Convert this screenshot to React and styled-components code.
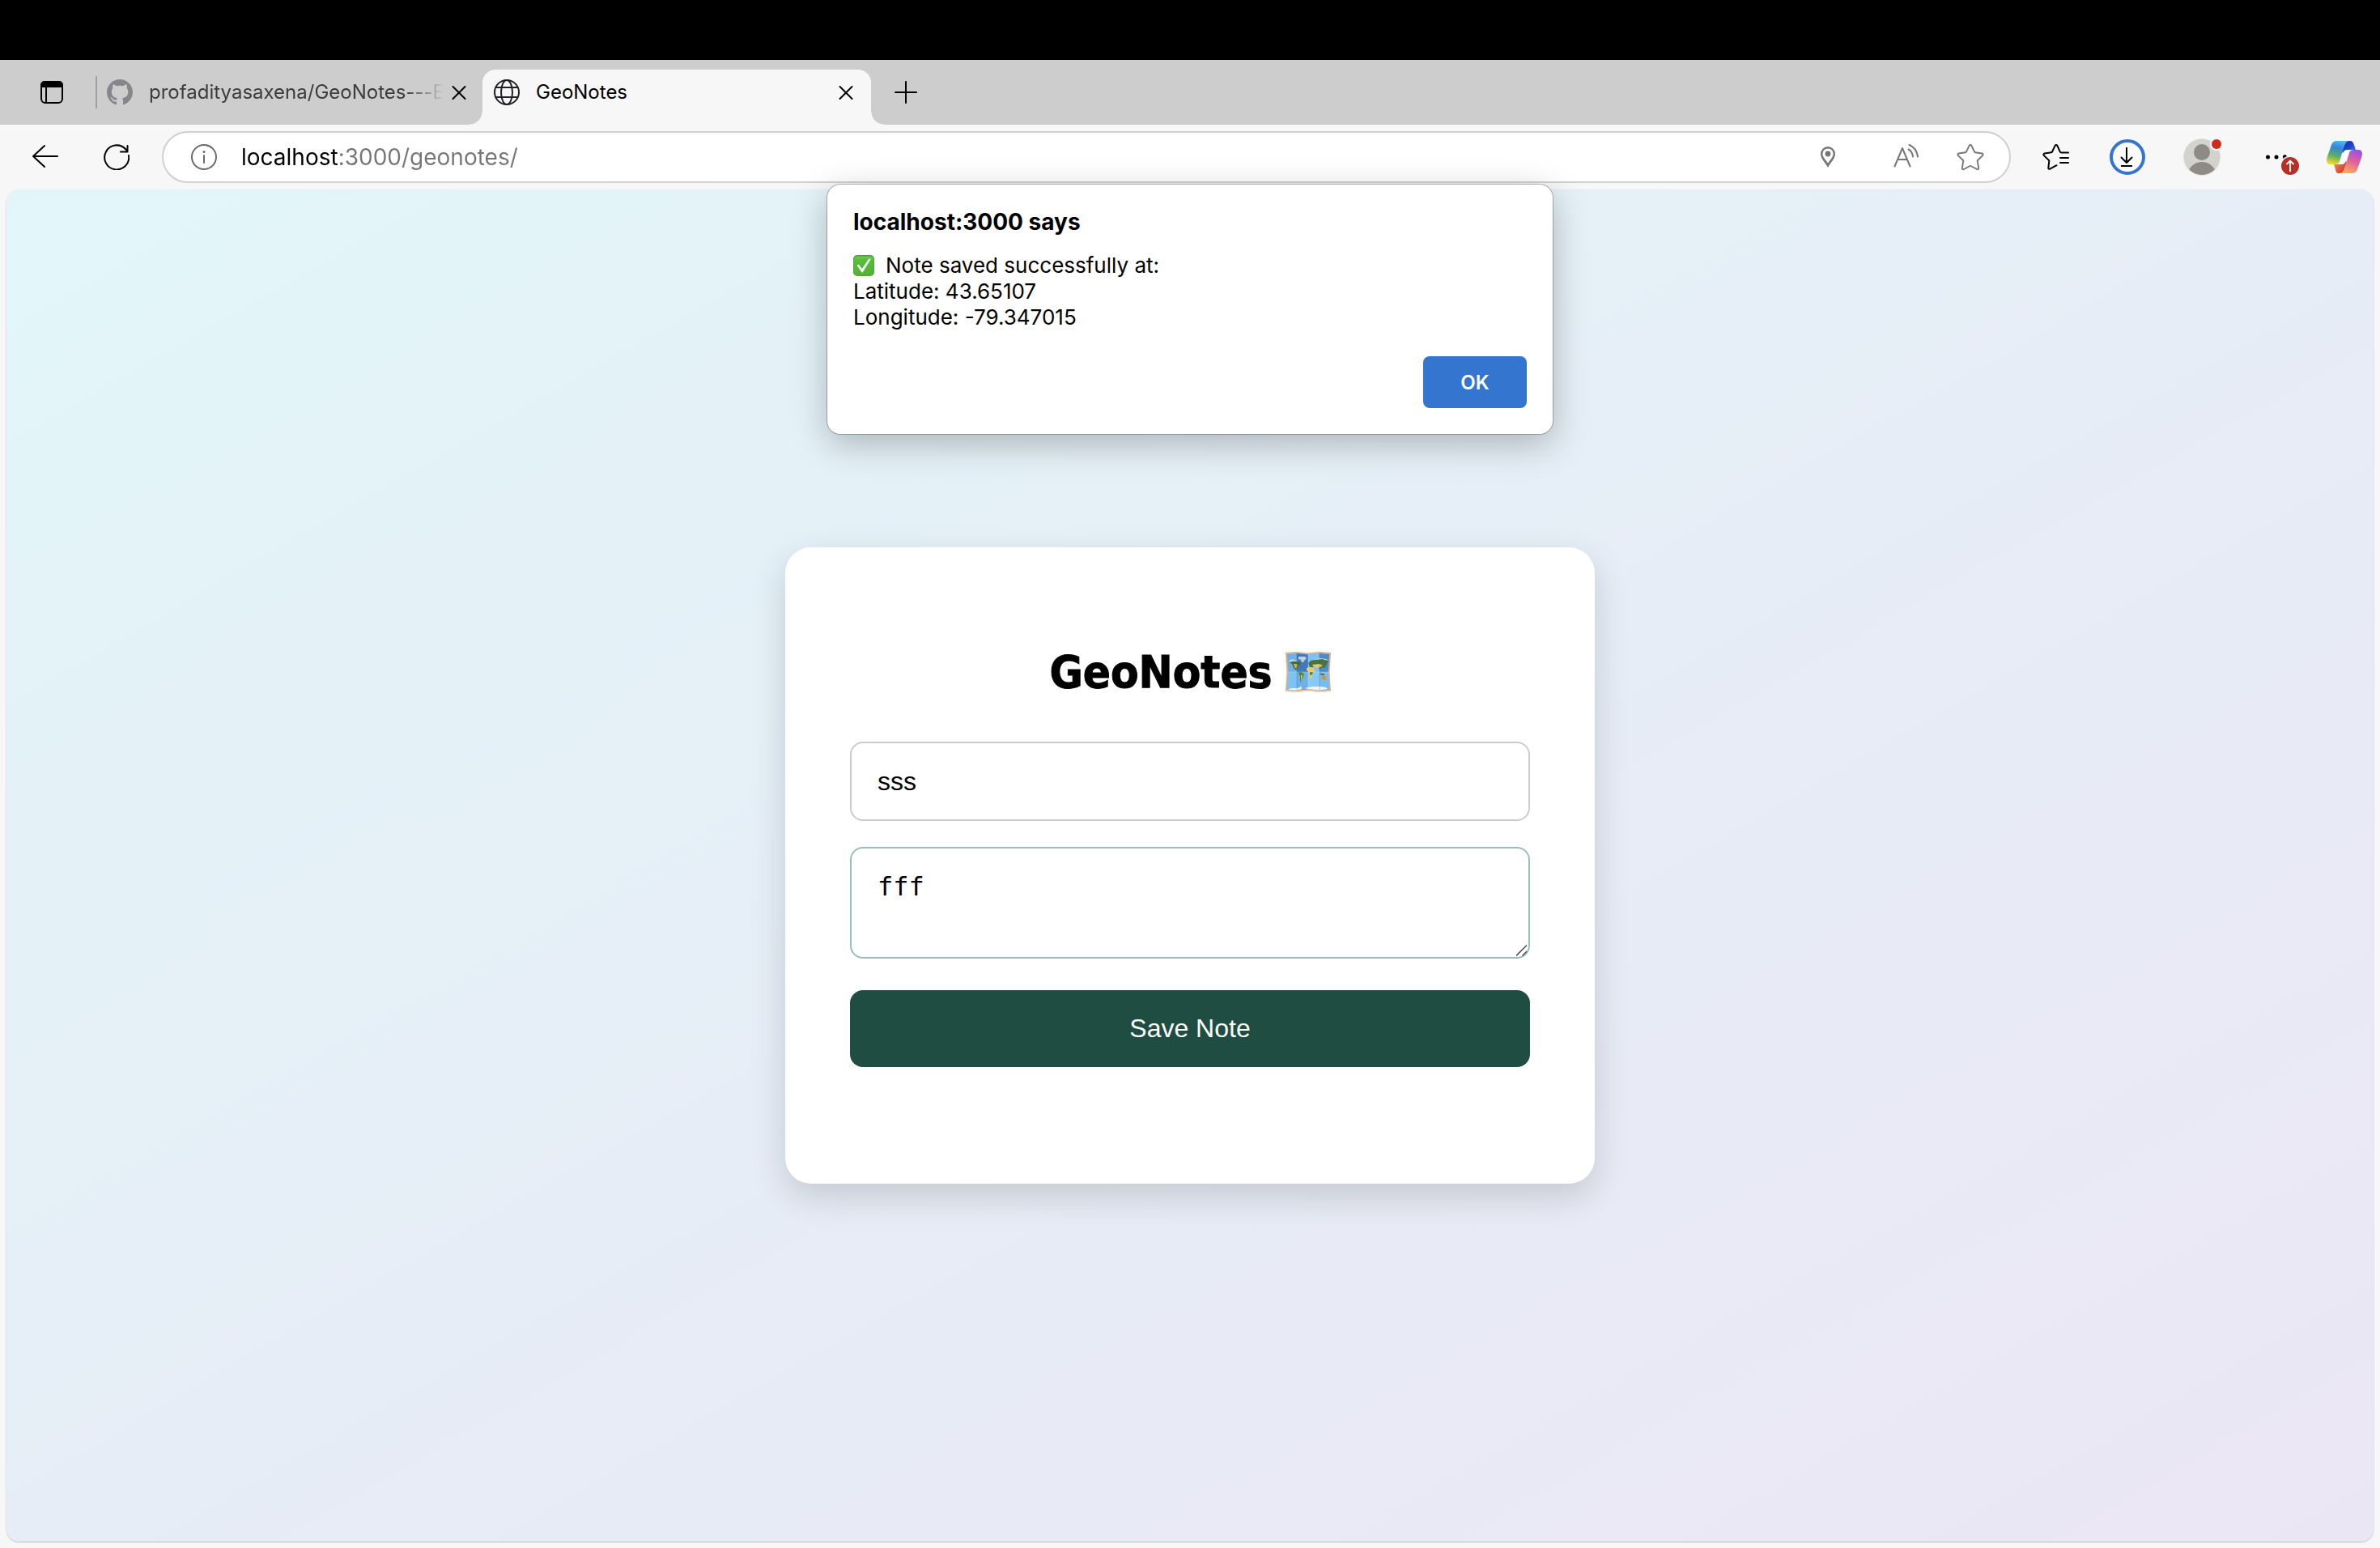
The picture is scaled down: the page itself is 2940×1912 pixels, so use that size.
import React, { useState } from "react";
import styled, { createGlobalStyle, css } from "styled-components";

const ui = `Inter, "Noto Sans", sans-serif`;
const form = `"Liberation Sans", Arial, sans-serif`;

const GlobalStyle = createGlobalStyle`
  *, *::before, *::after { box-sizing: border-box; }
  body { margin: 0; background: #f7f7f7; font-family: ${ui}; color: #000; }
  button { font: inherit; color: inherit; border: 0; padding: 0; background: none; cursor: pointer; }
  svg { display: block; flex: none; }
`;

const Window = styled.div`
  min-height: 100vh;
  display: flex;
  flex-direction: column;
`;

const MenuBarStrip = styled.div`
  height: 74px;
  background: #000;
`;

const TabStrip = styled.div`
  height: 80px;
  padding: 12px 0 0 32px;
  display: flex;
  background: #cdcdcd;
`;

const StripButton = styled.button`
  width: ${(p) => p.$width}px;
  height: 56px;
  display: flex;
  align-items: center;
  justify-content: center;
`;

const Divider = styled.span`
  width: 2px;
  height: 40px;
  margin: 8px 0 0 22px;
  background: #a0a0a0;
`;

const Tab = styled.div`
  position: relative;
  width: ${(p) => (p.$active ? 480 : 476)}px;
  height: 68px;
  padding: 0 ${(p) => (p.$active ? 14 : 12)}px 12px;
  display: flex;
  align-items: center;
  ${(p) =>
    p.$active &&
    css`
      background: #f7f7f7;
      border-radius: 16px 16px 0 0;
      &::before,
      &::after {
        content: "";
        position: absolute;
        bottom: 0;
        width: 16px;
        height: 16px;
      }
      &::before {
        right: 100%;
        background: radial-gradient(circle at 0 0, #cdcdcd 15px, #f7f7f7 16px);
      }
      &::after {
        left: 100%;
        background: radial-gradient(circle at 100% 0, #cdcdcd 15px, #f7f7f7 16px);
      }
    `}
`;

const TabTitle = styled.button`
  flex: 1;
  min-width: 0;
  height: 56px;
  display: flex;
  align-items: center;
  gap: 20px;
  text-align: left;
`;

const TabText = styled.span`
  flex: 1;
  min-width: 0;
  font-size: 24px;
  line-height: 32px;
  white-space: nowrap;
  color: ${(p) => (p.$dim ? "#3c3c3c" : "#000")};
  ${(p) =>
    p.$dim &&
    css`
      mask-image: linear-gradient(to right, #000 calc(100% - 48px), transparent calc(100% - 2px));
    `}
`;

const CloseButton = styled.button`
  width: 34px;
  height: 32px;
  display: flex;
  align-items: center;
  justify-content: center;
`;

const Toolbar = styled.div`
  height: 80px;
  padding: 0 24px;
  display: flex;
  align-items: center;
  gap: 24px;
`;

const ToolButton = styled.button`
  width: ${(p) => p.$width || 64}px;
  height: 64px;
  flex: none;
  display: flex;
  align-items: center;
  justify-content: center;
`;

const AddressBar = styled.div`
  flex: 1;
  min-width: 0;
  height: 64px;
  padding: 0 8px 0 34px;
  display: flex;
  align-items: center;
  background: #fff;
  border: 2px solid #d0d0d0;
  border-radius: 32px;
`;

const AddressInput = styled.input`
  flex: 1;
  min-width: 0;
  height: 48px;
  margin-left: 30px;
  padding: 0;
  border: 0;
  outline: 0;
  font-family: ${ui};
  font-size: 28px;
  background: linear-gradient(to right, #000 122px, #767676 122px);
  background-clip: text;
  -webkit-text-fill-color: transparent;
`;

const Viewport = styled.main`
  position: relative;
  flex: 1;
  margin: 0 8px 8px;
  padding: 64px;
  display: flex;
  align-items: center;
  justify-content: center;
  border-radius: 16px;
  box-shadow: 0 1px 2px rgba(0, 0, 0, 0.25);
  background: linear-gradient(to bottom right, #e2f6f9, #e6edf6 50%, #ebe6f4);
`;

const DialogLayer = styled.div`
  position: absolute;
  inset: -6px 0 auto;
  display: flex;
  justify-content: center;
`;

const Dialog = styled.div`
  width: 896px;
  padding: 32px;
  background: #fff;
  border-radius: 16px;
  box-shadow: 0 0 0 1px rgba(0, 0, 0, 0.25), 0 12px 44px rgba(0, 0, 0, 0.25);
`;

const DialogTitle = styled.h2`
  margin: 0 0 24px;
  font-size: 28px;
  line-height: 28px;
  font-weight: 700;
`;

const DialogText = styled.p`
  margin: 0;
  font-size: 26px;
  line-height: 32px;
`;

const DialogLine = styled.span`
  display: flex;
  align-items: center;
  gap: 14px;
`;

const DialogActions = styled.div`
  margin-top: 32px;
  display: flex;
  justify-content: flex-end;
`;

const OkButton = styled.button`
  width: 128px;
  height: 64px;
  border-radius: 8px;
  background: #3375cf;
  color: #fff;
  font-size: 24px;
  font-weight: 600;
`;

const Card = styled.form`
  width: 1000px;
  max-width: 100%;
  padding: 120px 80px 144px;
  display: flex;
  flex-direction: column;
  background: #fff;
  border-radius: 32px;
  box-shadow: 0 16px 44px rgba(0, 0, 0, 0.15);
`;

const Heading = styled.h1`
  margin: 0 0 52px;
  display: flex;
  align-items: center;
  justify-content: center;
  gap: 16px;
  font-family: "DejaVu Sans Condensed", "DejaVu Sans", sans-serif;
  font-size: 56px;
  line-height: 68px;
  font-weight: 700;
  -webkit-text-stroke: 1px #000;
`;

const field = css`
  display: block;
  width: 100%;
  padding: 28px 32px;
  border: 2px solid ${(p) => p.$border};
  border-radius: 16px;
  outline: 0;
  background: #fff;
  color: #000;
  font-size: 32px;
  line-height: 38px;
`;

const TitleInput = styled.input`
  ${field}
  height: 98px;
  margin-bottom: 32px;
  font-family: ${form};
`;

const NoteWrap = styled.div`
  position: relative;
  margin-bottom: 39px;
`;

const NoteInput = styled.textarea`
  ${field}
  height: 138px;
  resize: none;
  overflow: hidden;
  font-family: "DejaVu Sans Mono", monospace;
`;

const Grip = styled.svg`
  position: absolute;
  right: 3px;
  bottom: 3px;
  pointer-events: none;
`;

const SaveButton = styled.button`
  height: 95px;
  border-radius: 16px;
  background: #1f4d42;
  color: #fff;
  font-family: ${form};
  font-size: 32px;
`;

const stroke = { fill: "none", stroke: "currentColor", strokeLinecap: "round", strokeLinejoin: "round" };

const SidebarIcon = () => (
  <svg width="32" height="32" viewBox="0 0 32 32">
    <rect x="3" y="3" width="26" height="26" rx="5" {...stroke} strokeWidth="2" />
    <path d="M2 10V7a5 5 0 0 1 5-5h18a5 5 0 0 1 5 5v3z" />
    <path d="M9 10v19" {...stroke} strokeWidth="2" />
  </svg>
);

const GithubIcon = () => (
  <svg width="32" height="32" viewBox="0 0 16 16" fill="#85878a">
    <path d="M8 0C3.58 0 0 3.58 0 8c0 3.54 2.29 6.53 5.47 7.59.4.07.55-.17.55-.38 0-.19-.01-.82-.01-1.49-2.01.37-2.53-.49-2.69-.94-.09-.23-.48-.94-.82-1.13-.28-.15-.68-.52-.01-.53.63-.01 1.08.58 1.23.82.72 1.21 1.87.87 2.33.66.07-.52.28-.87.51-1.07-1.78-.2-3.64-.89-3.64-3.95 0-.87.31-1.59.82-2.15-.08-.2-.36-1.02.08-2.12 0 0 .67-.21 2.2.82.64-.18 1.32-.27 2-.27.68 0 1.36.09 2 .27 1.53-1.04 2.2-.82 2.2-.82.44 1.1.16 1.92.08 2.12.51.56.82 1.27.82 2.15 0 3.07-1.87 3.75-3.65 3.95.29.25.54.73.54 1.48 0 1.07-.01 1.93-.01 2.2 0 .21.15.46.55.38A8.01 8.01 0 0 0 16 8c0-4.42-3.58-8-8-8Z" />
  </svg>
);

const GlobeIcon = () => (
  <svg width="32" height="32" viewBox="0 0 32 32" color="#202124" {...stroke} strokeWidth="2">
    <circle cx="16" cy="16" r="15" />
    <ellipse cx="16" cy="16" rx="7" ry="15" />
    <path d="M2.500 10h27M2.500 22h27" />
  </svg>
);

const CloseIcon = () => (
  <svg width="18" height="18" viewBox="0 0 18 18" {...stroke} strokeWidth="2">
    <path d="M1.500 2l15 15M16.500 2l-15 15" />
  </svg>
);

const PlusIcon = () => (
  <svg width="28" height="28" viewBox="0 0 28 28" {...stroke} strokeWidth="2">
    <path d="M14 1v26M1 14h26" />
  </svg>
);

const BackIcon = () => (
  <svg width="32" height="32" viewBox="0 0 32 32" {...stroke} strokeWidth="2">
    <path d="M31 15H1M15 2L1 15l14 13" />
  </svg>
);

const ReloadIcon = () => (
  <svg width="32" height="32" viewBox="0 0 32 32" {...stroke} strokeWidth="2">
    <path d="M31 14a15 15 0 1 1-4-8l2.500 3M29.500 2v7.500H21" />
  </svg>
);

const InfoIcon = () => (
  <svg width="32" height="32" viewBox="0 0 32 32" color="#6b6b6b" {...stroke} strokeWidth="2">
    <circle cx="16" cy="16" r="15" />
    <path d="M16 14v9" />
    <circle cx="16" cy="9.500" r="1.500" fill="currentColor" stroke="none" />
  </svg>
);

const PinIcon = () => (
  <svg width="20" height="28" viewBox="0 0 20 28" color="#767676">
    <path
      fill="currentColor"
      fillRule="evenodd"
      d="M10 1a9 9 0 0 1 9 9c0 6-5.500 10-9 17C6.500 20 1 16 1 10a9 9 0 0 1 9-9zm0 2.400A6.600 6.600 0 0 0 3.400 10c0 4 3.600 7 6.600 11.500C13 17 16.600 14 16.600 10A6.600 6.600 0 0 0 10 3.400z"
    />
    <circle cx="10" cy="10" r="3.400" fill="currentColor" />
  </svg>
);

const ReadAloudIcon = () => (
  <svg width="32" height="32" viewBox="0 0 32 32" color="#767676" {...stroke} strokeWidth="2">
    <path d="M2.500 27.500L12 5l9.500 22.500M6 19h12" />
    <path d="M19.500 6.500c3 1.500 5 4.500 5.500 9M20.500 1c5.500 2.200 9.500 7 10.500 14.500" />
  </svg>
);

const StarIcon = () => (
  <svg width="34" height="34" viewBox="0 0 34 34" color="#767676" {...stroke} strokeWidth="1.900">
    <path d="M15.600 2.900a1.600 1.600 0 0 1 2.800 0l3.700 7.800a1 1 0 0 0 .8.600l8.400 1.200a1.500 1.500 0 0 1 .8 2.600l-6.100 5.900a1 1 0 0 0-.3.900l1.500 8.500a1.500 1.500 0 0 1-2.200 1.600l-7.500-4a1 1 0 0 0-1 0l-7.500 4a1.500 1.500 0 0 1-2.200-1.600l1.500-8.500a1 1 0 0 0-.3-.9l-6.100-5.900a1.500 1.500 0 0 1 .8-2.600l8.400-1.200a1 1 0 0 0 .8-.6z" />
  </svg>
);

const FavoritesIcon = () => (
  <svg width="34" height="34" viewBox="0 0 34 34" {...stroke} strokeWidth="2">
    <path d="M32 11.500h-8.500a2 2 0 0 1-1.800-1.200L18.400 2.900a1.600 1.600 0 0 0-2.800 0l-3.700 7.800a1 1 0 0 1-.8.600l-8.400 1.200a1.500 1.500 0 0 0-.8 2.600L8 21a1 1 0 0 1 .3.900l-1 8.500a1.300 1.300 0 0 0 2 1.300l8.200-4.500M22 18h10M22 24h10" />
  </svg>
);

const DownloadIcon = () => (
  <svg width="44" height="44" viewBox="0 0 44 44">
    <circle cx="22" cy="22" r="20" fill="#fbfbfb" stroke="#3375d0" strokeWidth="4" />
    <g {...stroke} strokeWidth="2" strokeLinecap="butt">
      <path d="M21 10v19M14 22l7 7 7-7M14 33h14" />
    </g>
  </svg>
);

const AvatarIcon = () => (
  <svg width="48" height="48" viewBox="0 0 48 48">
    <defs>
      <clipPath id="avatar-clip">
        <circle cx="24" cy="24" r="22" />
      </clipPath>
    </defs>
    <circle cx="24" cy="24" r="23" fill="#dededc" />
    <circle cx="24" cy="24" r="22" fill="#d3d2ce" />
    <g clipPath="url(#avatar-clip)" fill="#8e8a86">
      <circle cx="24" cy="18" r="10" />
      <circle cx="24" cy="48" r="18" />
    </g>
    <circle cx="42" cy="8" r="8" fill="#f7f7f7" />
    <circle cx="42" cy="8" r="6" fill="#ce2b20" />
  </svg>
);

const MoreIcon = () => (
  <svg width="48" height="48" viewBox="0 0 48 48">
    <circle cx="9.500" cy="24" r="2.500" />
    <circle cx="20" cy="24" r="2.500" />
    <circle cx="30.500" cy="24" r="2.500" />
    <circle cx="37" cy="35" r="12.500" fill="#f7f7f7" />
    <path d="M28 24.500a2.500 2.500 0 0 1 4.500-2z" />
    <circle cx="37" cy="35" r="11" fill="#b53127" />
    <path d="M37 42V29M32.500 33l4.500-4.500 4.500 4.500" fill="none" stroke="#fff" strokeWidth="1.800" />
  </svg>
);

const CopilotIcon = () => (
  <svg width="44" height="40" viewBox="0 0 44 40">
    <defs>
      <linearGradient id="cp-left" x1="0.600" y1="0" x2="0.350" y2="1">
        <stop offset="0" stopColor="#4fb8f0" />
        <stop offset="0.300" stopColor="#3484dc" />
        <stop offset="0.650" stopColor="#58b064" />
        <stop offset="1" stopColor="#f6d42c" />
      </linearGradient>
      <linearGradient id="cp-blue" x1="0" y1="0" x2="1" y2="1">
        <stop offset="0" stopColor="#1736b4" />
        <stop offset="0.500" stopColor="#2040c4" />
        <stop offset="1" stopColor="#4a92ec" />
      </linearGradient>
      <linearGradient id="cp-right" x1="0.700" y1="0" x2="0.300" y2="1">
        <stop offset="0" stopColor="#9a50e8" />
        <stop offset="0.450" stopColor="#e0609c" />
        <stop offset="1" stopColor="#fbb05c" />
      </linearGradient>
      <linearGradient id="cp-orange" x1="0" y1="0" x2="1" y2="0.600">
        <stop offset="0" stopColor="#f8a040" />
        <stop offset="0.500" stopColor="#e8603c" />
        <stop offset="1" stopColor="#c83c3c" />
      </linearGradient>
    </defs>
    <path fill="url(#cp-blue)" d="M26 0h3c3 0 4 2 5 5l2 6h-7c-4 0-5 2-6 5l-4-2 3-9c1-3 2-5 4-5z" />
    <path fill="url(#cp-orange)" d="M18 40h-3c-3 0-3.500-2-4-5l-2-6h5c4 0 6-2 7-5l4 2-3 9c-1 3-2 5-4 5z" />
    <path fill="#fff" d="M29 11h-3c-4 0-5 2-6 5l-4 13h-2 4c4 0 5-2 6-5z" />
    <path fill="url(#cp-left)" d="M13 0h15c-3 0-5 3-6 6l-6 19c-1 3-2.500 4-6 4H5c-5 0-6-4-4-10L6 5c1-3 3-5 7-5z" />
    <path fill="url(#cp-right)" d="M31 40H16c3 0 5-3 6-6l6-19c1-3 2.500-4 6-4h5c5 0 6 4 4 10l-5 14c-1 3-3 5-7 5z" />
  </svg>
);

const CheckIcon = () => (
  <svg width="26" height="26" viewBox="0 0 26 26" role="img" aria-label="Success">
    <defs>
      <linearGradient id="check-fill" x1="0" y1="0" x2="0" y2="1">
        <stop offset="0" stopColor="#6fcb55" />
        <stop offset="0.200" stopColor="#56bf38" />
        <stop offset="1" stopColor="#55b034" />
      </linearGradient>
    </defs>
    <rect width="26" height="26" rx="5" fill="#4a9c33" />
    <rect x="0.600" y="1.400" width="24.800" height="24" rx="4.600" fill="url(#check-fill)" />
    <path d="M4.500 13l2.200-1.600 4.100 5.600L19.200 4.800h2.600L11.200 22z" fill="#fff" />
  </svg>
);

const MapIcon = () => (
  <svg width="56" height="50" viewBox="0 0 56 50" role="img" aria-label="World map">
    <path fill="#d9b18c" d="M0 1L14 0l14 1.500L42 0l14 1-1.500 24L56 49l-14 1-14-1.500L14 50 0 49l1.500-24z" />
    <path fill="#f5e3cf" d="M.5 48L14 49l14-1.500L42 49l13.500-1v1L42 50l-14-1.500L14 50 .5 49z" />
    <path fill="#6cb0ea" d="M2 3l12-1v45.500L2 47l1.500-22z" />
    <path fill="#4b88cc" d="M14 2l14 1.500V46L14 47.500z" />
    <path fill="#7cc0f4" d="M28 3.500L42 2v45.500L28 46z" />
    <path fill="#5c9fe0" d="M42 2l12 1-1.500 22L54 47l-12 .5z" />
    <path fill="#8fd2fb" opacity="0.550" d="M3 25h50l1 22-12 .5L28 46l-14 1.500L2 47z" />
    <path fill="#1e4f94" opacity="0.250" d="M14 2l14 1.500V25H14zM42 2l12 1-1 22H42z" />
    <path fill="#c3d0dc" d="M4 11l4-2 3 1 3 1 2 1-3 2-8-1zM16 6l8 0 2 2-3 3-1 2-2 0-1-3-3-1z" />
    <path fill="#dde5ea" d="M36 10l6-2 8 1 3 2-8 1-8 0z" />
    <path fill="#3e6f3a" d="M5 13l4-1 8 0 2 3-3 3-2 3-1 2-3-3-2-5z" />
    <path fill="#d3b04a" d="M10 15l4 0 1 2-2 4-2-2z" />
    <path fill="#4f8a3a" d="M16 24l3 0 4 4-1 3-2 3-1 4-1-3 0-5-2-3z" />
    <path fill="#e3c552" d="M19 29l2 0-1 4-1 3z" />
    <path fill="#47743c" d="M28 14l3-3 6-1 8-1 8 2-2 4-3 5-3-1-2 3-3-3-4 0-6 0z" />
    <path fill="#e6c964" d="M26 20l5-1 5 2 0 3-3 3-1 6-2 1-1-4 0-5-3-2zM33 16l9-1 4 2-5 3-6-1z" />
    <path fill="#4e8240" d="M30 25l4 0-1 3-3 1z" />
    <path fill="#3f8046" d="M42 26l3 1 3 0 0 2-4 0z" />
    <path fill="#e28d2c" d="M44 31l4-2 2 3-1 3-4-1z" />
    <path fill="#eef5fa" d="M4 46l4-1 6 0 4-1 1-2 1 4-6 1.500L4 47zM24 45l4-1 6-1 9 0 7 1 2 2-10 1.500L28 46z" />
    <path d="M14 2v45.500M42 2v45.500" stroke="#2c5f9c" strokeOpacity="0.400" strokeWidth="0.800" />
    <path d="M28 3v43M3 25h50" stroke="#fff" strokeOpacity="0.300" strokeWidth="0.800" />
  </svg>
);

export default function App() {
  const [title, setTitle] = useState("sss");
  const [note, setNote] = useState("fff");
  const [url, setUrl] = useState("localhost:3000/geonotes/");

  return (
    <>
      <GlobalStyle />
      <Window>
        <MenuBarStrip />
        <TabStrip>
          <StripButton $width={64} aria-label="Tab actions">
            <SidebarIcon />
          </StripButton>
          <Divider />
          <Tab>
            <TabTitle>
              <GithubIcon />
              <TabText $dim>profadityasaxena/GeoNotes---E</TabText>
            </TabTitle>
            <CloseButton aria-label="Close tab">
              <CloseIcon />
            </CloseButton>
          </Tab>
          <Tab $active>
            <TabTitle>
              <GlobeIcon />
              <TabText>GeoNotes</TabText>
            </TabTitle>
            <CloseButton aria-label="Close tab">
              <CloseIcon />
            </CloseButton>
          </Tab>
          <StripButton $width={86} aria-label="New tab">
            <PlusIcon />
          </StripButton>
        </TabStrip>

        <Toolbar>
          <ToolButton aria-label="Back">
            <BackIcon />
          </ToolButton>
          <ToolButton aria-label="Reload">
            <ReloadIcon />
          </ToolButton>
          <AddressBar>
            <InfoIcon />
            <AddressInput aria-label="Address" value={url} onChange={(e) => setUrl(e.target.value)} />
            <ToolButton $width={112} aria-label="Location">
              <PinIcon />
            </ToolButton>
            <ToolButton $width={80} aria-label="Read aloud">
              <ReadAloudIcon />
            </ToolButton>
            <ToolButton $width={80} aria-label="Add to favorites">
              <StarIcon />
            </ToolButton>
          </AddressBar>
          <ToolButton aria-label="Favorites">
            <FavoritesIcon />
          </ToolButton>
          <ToolButton aria-label="Downloads">
            <DownloadIcon />
          </ToolButton>
          <ToolButton $width={72} aria-label="Profile">
            <AvatarIcon />
          </ToolButton>
          <ToolButton $width={72} aria-label="More">
            <MoreIcon />
          </ToolButton>
          <ToolButton $width={40} aria-label="Copilot">
            <CopilotIcon />
          </ToolButton>
        </Toolbar>

        <Viewport>
          <Card onSubmit={(e) => e.preventDefault()}>
            <Heading>
              GeoNotes
              <MapIcon />
            </Heading>
            <TitleInput
              $border="#cccccc"
              aria-label="Title"
              value={title}
              onChange={(e) => setTitle(e.target.value)}
            />
            <NoteWrap>
              <NoteInput
                $border="#99beb7"
                aria-label="Note"
                value={note}
                onChange={(e) => setNote(e.target.value)}
              />
              <Grip width="14" height="14" viewBox="0 0 14 14" fill="none" stroke="#555" strokeWidth="1.600">
                <path d="M0 13.500L13 .5M7.500 13.500L13 8" />
              </Grip>
            </NoteWrap>
            <SaveButton type="submit">Save Note</SaveButton>
          </Card>

          <DialogLayer>
            <Dialog role="alertdialog" aria-labelledby="dialog-title">
              <DialogTitle id="dialog-title">localhost:3000 says</DialogTitle>
              <DialogText>
                <DialogLine>
                  <CheckIcon />
                  Note saved successfully at:
                </DialogLine>
                <DialogLine>Latitude: 43.65107</DialogLine>
                <DialogLine>Longitude: -79.347015</DialogLine>
              </DialogText>
              <DialogActions>
                <OkButton>OK</OkButton>
              </DialogActions>
            </Dialog>
          </DialogLayer>
        </Viewport>
      </Window>
    </>
  );
}
